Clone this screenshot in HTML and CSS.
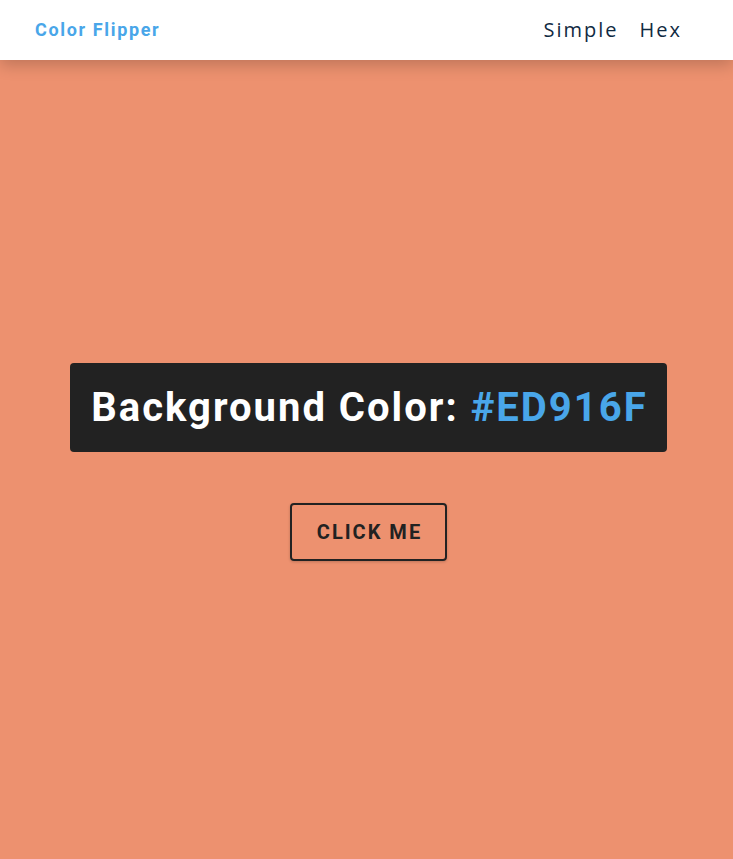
FILE: index.html
```html
<!DOCTYPE html>
<html lang="en">
<head>
<meta charset="UTF-8">
<title>Color Flipper</title>
<link rel="stylesheet" href="styles.css">
</head>
<body>
<nav class="nav">
  <h4 class="logo">Color Flipper</h4>
  <ul class="nav-links">
    <li><a href="#">Simple</a></li>
    <li><a href="#">Hex</a></li>
  </ul>
</nav>
<main class="main">
  <div class="container">
    <h2 class="title">Background Color: <span class="color">#ED916F</span></h2>
    <button class="btn-hero">Click Me</button>
  </div>
</main>
</body>
</html>
```
FILE: styles.css
```css
* { margin: 0; padding: 0; box-sizing: border-box; }
html, body { height: 100%; }
body {
  font-family: "Open Sans", sans-serif;
  background: #ed916f;
  color: #102a42;
}
.nav {
  height: 60px;
  background: #fff;
  display: flex;
  align-items: center;
  justify-content: space-between;
  padding: 0 51px 0 35px;
  box-shadow: 0 5px 15px rgba(0, 0, 0, 0.2);
  position: relative;
  z-index: 1;
}
.logo {
  font-family: Roboto, sans-serif;
  font-weight: 700;
  font-size: 18px;
  letter-spacing: 1.65px;
  color: #49a6e9;
  margin-top: -1px;
}
.nav-links {
  list-style: none;
  display: flex;
  gap: 21px;
  margin-top: -1px;
}
.nav-links a {
  text-decoration: none;
  color: #102a42;
  font-size: 20px;
  letter-spacing: 2px;
}
.main {
  min-height: calc(100vh - 60px);
  display: flex;
  align-items: center;
  justify-content: center;
  padding-left: 4px;
}
.container {
  display: flex;
  flex-direction: column;
  align-items: center;
  margin-top: 4px;
}
.title {
  font-family: Roboto, sans-serif;
  font-weight: 700;
  font-size: 40px;
  line-height: 49px;
  letter-spacing: 2px;
  color: #fff;
  background: #222;
  padding: 20px 19px 20px 21px;
  border-radius: 4px;
  margin-bottom: 51px;
}
.color { color: #49a6e9; }
.btn-hero {
  font-family: Roboto, sans-serif;
  text-transform: uppercase;
  background: transparent;
  color: #222;
  letter-spacing: 2px;
  font-weight: 700;
  font-size: 20px;
  line-height: 24px;
  border: 2px solid #222;
  box-shadow: 0 1px 3px rgba(0, 0, 0, 0.2);
  border-radius: 4px;
  padding: 15px 23px 15px 25px;
  cursor: pointer;
}
```
